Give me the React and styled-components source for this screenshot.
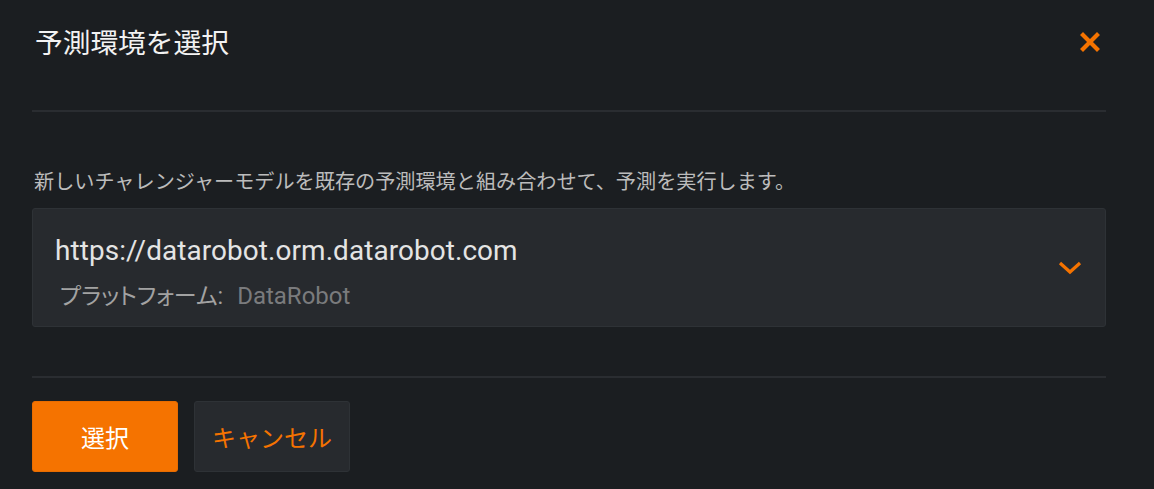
import { createGlobalStyle } from "styled-components";
import styled from "styled-components";

const GlobalStyle = createGlobalStyle`
  html, body {
    margin: 0;
    padding: 0;
    background: #1b1e21;
  }
  body {
    font-family: Roboto, "Noto Sans CJK JP", sans-serif;
    color: #e8e8e8;
  }
`;

const App = () => {
  return (
    <>
      <GlobalStyle />
      <StModal>
        <StHeader>
          <StTitle>予測環境を選択</StTitle>
          <StClose aria-label="close">
            <svg width="20" height="20" viewBox="0 0 20 20">
              <path
                d="M3 3 L17 17 M17 3 L3 17"
                stroke="#f57300"
                strokeWidth="4.2"
                strokeLinecap="square"
              />
            </svg>
          </StClose>
        </StHeader>
        <StDivider />
        <StDesc>
          新しいチャレンジャーモデルを既存の予測環境と組み合わせて、予測を実行します。
        </StDesc>
        <StSelect>
          <StSelectText>
            <StUrl>https://datarobot.orm.datarobot.com</StUrl>
            <StSub>
              プラットフォーム:<StMuted>DataRobot</StMuted>
            </StSub>
          </StSelectText>
          <svg width="24" height="14" viewBox="0 0 24 14">
            <path
              d="M2 2 L12 11 L22 2"
              fill="none"
              stroke="#f57300"
              strokeWidth="3.2"
            />
          </svg>
        </StSelect>
        <StDivider $gap={49} />
        <StActions>
          <StBtn $primary>選択</StBtn>
          <StBtn>キャンセル</StBtn>
        </StActions>
      </StModal>
    </>
  );
};

const StModal = styled.div`
  width: 1074px;
  padding: 0 48px 16px 32px;
`;

const StHeader = styled.div`
  height: 84px;
  padding-top: 4px;
  box-sizing: border-box;
  display: flex;
  align-items: center;
  justify-content: space-between;
`;

const StTitle = styled.h2`
  margin: 0 0 0 3px;
  font-size: 27.7px;
  font-weight: 400;
  line-height: 34px;
  color: #f2f2f2;
`;

const StClose = styled.button`
  width: 32px;
  height: 32px;
  margin-top: -4px;
  padding: 0;
  display: flex;
  align-items: center;
  justify-content: center;
  background: none;
  border: none;
  cursor: pointer;
`;

const StDivider = styled.div`
  height: 2px;
  margin-top: ${(p) => (p.$gap ? p.$gap : 26)}px;
  background: #2a2d31;
`;

const StDesc = styled.p`
  margin: 56px 0 12px 2px;
  font-size: 20.15px;
  line-height: 28px;
  color: #bcbcbc;
`;

const StSelect = styled.div`
  height: 117px;
  box-sizing: content-box;
  padding: 0 23px 0 22px;
  display: flex;
  align-items: center;
  justify-content: space-between;
  background: #272a2e;
  border: 1px solid #2e3236;
  border-radius: 3px;
`;

const StSelectText = styled.div`
  display: flex;
  flex-direction: column;
  gap: 15px;
  padding-top: 11px;
`;

const StUrl = styled.div`
  font-size: 27.9px;
  line-height: 32px;
  color: #e4e4e4;
  letter-spacing: 0.1px;
`;

const StSub = styled.div`
  margin-left: 5px;
  font-size: 23px;
  line-height: 28px;
  color: #a2a2a2;
  font-feature-settings: "palt";
`;

const StMuted = styled.span`
  margin-left: 14px;
  font-size: 24px;
  color: #7a7b7d;
`;

const StActions = styled.div`
  margin-top: 23px;
  display: flex;
  gap: 16px;
`;

const StBtn = styled.button`
  min-width: 146px;
  height: 71px;
  padding: 0 17px;
  font-family: Roboto, "Noto Sans CJK JP", sans-serif;
  font-size: 24px;
  color: ${(p) => (p.$primary ? "#ffffff" : "#f57300")};
  background: ${(p) => (p.$primary ? "#f57300" : "#272a2e")};
  border: 1px solid ${(p) => (p.$primary ? "#e86c00" : "#2e3236")};
  border-radius: 3px;
  cursor: pointer;
`;

export default App;
